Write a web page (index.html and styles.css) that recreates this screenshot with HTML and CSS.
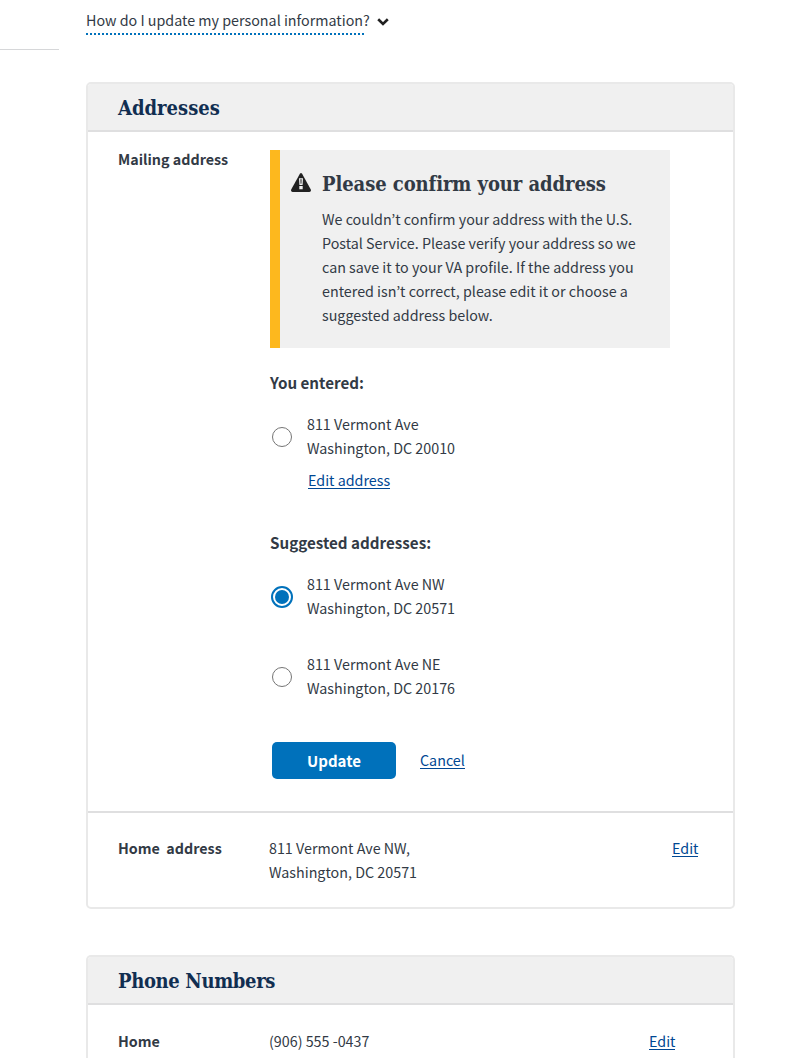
FILE: index.html
```
<!DOCTYPE html>
<html lang="en">
<head>
<meta charset="utf-8">
<title>Personal information</title>
<link rel="stylesheet" href="styles.css">
</head>
<body>
<div class="page">
  <aside class="side"></aside>
  <main class="content">
    <div class="help">
      <span class="help-text">How do I update my personal information?</span>
      <svg class="chevron" width="12" height="8" viewBox="0 0 12 8"><path d="M1.2 1.3 6 6l4.8-4.7" fill="none" stroke="#212121" stroke-width="2.6"/></svg>
    </div>

    <section class="card">
      <h2 class="card-title">Addresses</h2>
      <div class="row row-mailing">
        <div class="label">Mailing address</div>
        <div class="form">
          <div class="alert">
            <svg class="warn" width="20" height="19" viewBox="0 0 20 19"><path d="M8.9.7Q10-.7 11.1.7L19.8 16.6Q20.4 18.8 18.4 19H1.6Q-.4 18.8.2 16.6Z" fill="#212121"/><path d="M8 5.2h4l-.4 6.8H8.4zM8.3 13h3.4V16.3H8.3z" fill="#f0f0f0"/><path d="M9.4 6.3h1.2l-.2 4.5h-.8z" fill="#212121"/></svg>
            <div>
              <h3 class="alert-title">Please confirm your address</h3>
              <p class="alert-text">We couldn’t confirm your address with the U.S.<br>Postal Service. Please verify your address so we<br>can save it to your VA profile. If the address you<br>entered isn’t correct, please edit it or choose a<br>suggested address below.</p>
            </div>
          </div>

          <div class="group-title">You entered:</div>
          <div class="option">
            <span class="radio"></span>
            <div>811 Vermont Ave<br>Washington, DC 20010</div>
          </div>
          <a class="link edit-address">Edit address</a>

          <div class="group-title suggested">Suggested addresses:</div>
          <div class="option">
            <span class="radio checked"></span>
            <div>811 Vermont Ave NW<br>Washington, DC 20571</div>
          </div>
          <div class="option second">
            <span class="radio"></span>
            <div>811 Vermont Ave NE<br>Washington, DC 20176</div>
          </div>

          <div class="actions">
            <button class="update">Update</button>
            <a class="link">Cancel</a>
          </div>
        </div>
      </div>
      <div class="row row-home">
        <div class="label">Home&nbsp; address</div>
        <div class="value">811 Vermont Ave NW,<br>Washington, DC 20571</div>
        <a class="link">Edit</a>
      </div>
    </section>

    <section class="card phones">
      <h2 class="card-title phone-title">Phone Numbers</h2>
      <div class="row row-phone">
        <div class="label">Home</div>
        <div class="value">(906) 555 -0437</div>
        <a class="link">Edit</a>
      </div>
    </section>
  </main>
</div>
</body>
</html>
```
FILE: styles.css
```
*, *::before { box-sizing: border-box; }
body {
  margin: 0;
  background: #fff;
  color: #323a45;
  font: 14.3px/24px "Noto Sans CJK KR", "Noto Sans CJK SC", sans-serif;
  white-space: nowrap;
}
h2, h3, p { margin: 0; }
.page { display: flex; gap: 27px; }
.side { width: 59px; height: 50px; border-bottom: 1px solid #d6d7d9; }
.content { width: 649px; }

.help { display: flex; align-items: flex-start; gap: 13px; height: 82px; padding-top: 8px; }
.help-text {
  width: 278px;
  height: 27px;
  background: repeating-linear-gradient(90deg, #0071bb 0 2px, transparent 2px 4px) 0 100% / 100% 2px no-repeat;
}
.chevron { margin-top: 10px; }

.card { border: 2px solid #e9e9e9; border-radius: 5px; overflow: hidden; }
.phones { margin-top: 46px; height: 103px; border-bottom: 0; border-radius: 5px 5px 0 0; }
.card-title {
  height: 48px;
  padding-left: 30px;
  border-bottom: 2px solid #dfdfe0;
  background: #f0f0f0;
  color: #112e51;
  font: bold 20px/48px "DejaVu Serif Condensed", "DejaVu Serif", serif;
}
.phone-title { letter-spacing: -0.35px; }
.row { display: flex; padding-left: 30px; }
.label { width: 151px; flex: none; font-weight: 700; }
.row-mailing { height: 681px; padding-top: 18px; border-bottom: 2px solid #dfdfe0; }
.row-mailing .label { width: 152px; margin-top: -3px; }
.row-home { height: 94px; padding-top: 23px; }
.row-phone { padding-top: 24px; }
.value { width: 403px; }
.row-phone .value { width: 380px; }

.form { width: 400px; }
.alert {
  display: flex;
  gap: 11px;
  height: 198px;
  padding: 22px 0 0 11px;
  border-left: 10px solid #fdb81e;
  background: #f0f0f0;
}
.warn { margin-top: 1px; }
.alert-title { font: bold 20px/24px "DejaVu Serif Condensed", "DejaVu Serif", serif; letter-spacing: -0.08px; }
.alert-text { margin-top: 11px; }

.group-title { margin-top: 22px; font-size: 15.18px; font-weight: 700; }
.group-title.suggested { margin-top: 42px; }
.option { display: flex; align-items: center; gap: 14px; margin-top: 18px; padding-left: 1px; }
.option.second { margin-top: 32px; }
.radio { width: 22px; height: 22px; margin-top: 2px; border: 1px solid transparent; border-radius: 50%; background: #fff; }
.radio::before { content: ""; display: block; width: 20px; height: 20px; border: 1px solid #757575; border-radius: 50%; }
.radio.checked { border: 2px solid #0071bb; }
.radio.checked::before { width: 14px; height: 14px; margin: 2px; border: 0; background: #0071bb; }

.link { color: #004793; align-self: flex-start; box-shadow: 0 1px #004793; line-height: 20px; height: 18px; margin-top: 2px; }
.edit-address { display: block; width: 82px; margin: 10px 0 0 38px; }
.actions { display: flex; gap: 24px; margin-top: 42px; padding-left: 2px; }
.actions .link { margin-top: 8px; }
.update {
  width: 124px;
  height: 37px;
  padding: 0;
  border: 0;
  border-radius: 5px;
  background: #0071bb;
  color: #fff;
  font: 700 15px/37px "Noto Sans CJK KR", "Noto Sans CJK SC", sans-serif;
}
```
